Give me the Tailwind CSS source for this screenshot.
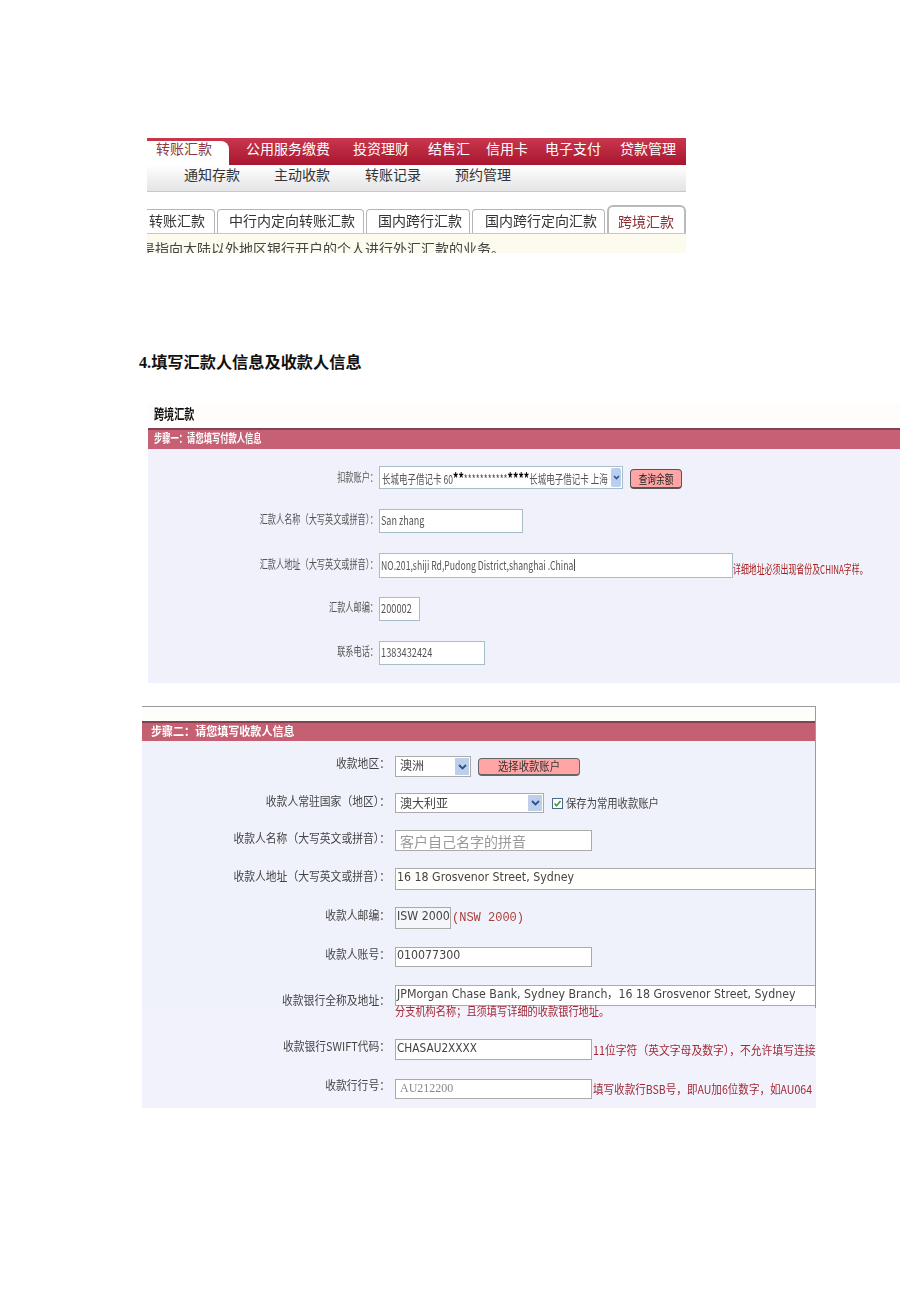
<!DOCTYPE html>
<html lang="zh-CN">
<head>
    <meta charset="UTF-8">
    <title>跨境汇款</title>
    <script src="https://cdn.jsdelivr.net/npm/@tailwindcss/browser@4"></script>
</head>
<body class="bg-white h-[1302px] overflow-hidden font-['Noto_Sans_CJK_SC',sans-serif] text-[#333]">

    <!-- 截图一: 导航 -->
    <section class="ml-[147px] mr-[234px] pt-[138px] h-[253px] overflow-hidden blur-[0.4px] text-[14px] leading-none">
        <div class="h-[27px] flex bg-gradient-to-b from-[#c9364d] to-[#a9142f] text-white">
            <div class="w-[82px] mt-[3px] pl-[9px] bg-white rounded-tr-[8px] text-[#8a3a40]">转账汇款</div>
            <span class="ml-[17px] pt-[3px]">公用服务缴费</span>
            <span class="ml-[23px] pt-[3px]">投资理财</span>
            <span class="ml-[19px] pt-[3px]">结售汇</span>
            <span class="ml-[16px] pt-[3px]">信用卡</span>
            <span class="ml-[17px] pt-[3px]">电子支付</span>
            <span class="ml-[19px] pt-[3px]">贷款管理</span>
        </div>
        <div class="h-[27px] flex pt-[2px] bg-gradient-to-b from-white to-[#e4e4e6] border-b border-[#c8c8c8] text-[#333]">
            <span class="ml-[37px]">通知存款</span>
            <span class="ml-[34px]">主动收款</span>
            <span class="ml-[35px]">转账记录</span>
            <span class="ml-[34px]">预约管理</span>
        </div>
        <div class="h-[42px] pt-[13px] flex items-end gap-[2px] border-b border-[#c8c8c8] text-[#333]">
            <div class="w-[68px] h-[24px] pt-[3px] pl-[2px] border-r border-t border-[#b5b5b5] rounded-tr-[4px] overflow-hidden whitespace-nowrap">转账汇款</div>
            <div class="w-[147px] h-[24px] pt-[3px] pl-[11px] border border-b-0 border-[#b5b5b5] rounded-t-[4px] whitespace-nowrap">中行内定向转账汇款</div>
            <div class="w-[104px] h-[24px] pt-[3px] pl-[11px] border border-b-0 border-[#b5b5b5] rounded-t-[4px] whitespace-nowrap">国内跨行汇款</div>
            <div class="w-[133px] h-[24px] pt-[3px] pl-[12px] border border-b-0 border-[#b5b5b5] rounded-t-[4px] whitespace-nowrap">国内跨行定向汇款</div>
            <div class="w-[79px] h-[28px] pt-[7px] pl-[9px] border-2 border-b-0 border-[#b9b9b9] rounded-t-[6px] text-[#8a2f35] whitespace-nowrap">跨境汇款</div>
        </div>
        <div class="h-[19px] pt-[7px] bg-[#fdfbee] text-[14px] whitespace-nowrap overflow-hidden text-[#444]">
            <span class="inline-block ml-[-6px]">是指向大陆以外地区银行开户的个人进行外汇汇款的业务。</span>
        </div>
    </section>

    <!-- 标题 -->
    <h2 class="ml-[139px] mt-[100px] h-[20px] text-[16.2px] leading-[20px] font-bold text-[#111] font-['Liberation_Serif','Noto_Sans_CJK_SC',serif]">4.填写汇款人信息及收款人信息</h2>

    <!-- 截图二: 付款人信息 -->
    <section class="ml-[148px] mt-[30px] w-[752px] blur-[0.35px] text-[12px]">
        <div class="h-[25px] pl-[6px] leading-[20px] bg-[#fffdfb] text-[14px] font-bold text-[#111]">
            <span class="block w-max origin-left scale-x-[0.72]">跨境汇款</span>
        </div>
        <div class="h-[21px] pl-[6px] border-t-2 border-[#84414f] bg-[#c66074] text-white font-bold leading-[16px]">
            <span class="block w-max origin-left scale-x-[0.69]">步骤一：请您填写付款人信息</span>
        </div>
        <div class="bg-[#f0f1fa] pt-[17px] pb-[18px] grid grid-cols-[231px_minmax(0,1fr)] items-center leading-none text-[#555]">
            <div class="flex justify-end pr-[1px] h-[23px] items-center whitespace-nowrap pb-[2px]"><span class="block origin-right scale-x-[0.68]">扣款账户：</span></div>
            <div class="flex items-center h-[23px]">
                <div class="w-[244px] h-[23px] bg-white border border-[#a9bdc9] flex items-center overflow-hidden">
                    <span class="flex-1 pl-[2px] whitespace-nowrap overflow-hidden"><span class="block w-max origin-left scale-x-[0.71]">长城电子借记卡 60<b class="text-black text-[15px] leading-none">**</b>***********<b class="text-black text-[15px] leading-none">****</b>长城电子借记卡 上海</span></span>
                    <span class="w-[10px] h-[19px] mr-[1px] bg-[#b9cff0] rounded-[2px] flex items-center justify-center">
                        <svg width="7" height="5" viewBox="0 0 7 5"><path d="M1 1l2.5 2.5L6 1" fill="none" stroke="#2f4f8f" stroke-width="1.6"/></svg>
                    </span>
                </div>
                <div class="ml-[7px] mt-[3px] w-[52px] h-[20px] bg-[#ffa5a5] border border-[#555] border-b-2 rounded-[4px] flex justify-center items-center text-[#222]"><span class="block whitespace-nowrap scale-x-[0.72]">查询余额</span></div>
            </div>

            <div class="mt-[20px] pb-[4px] flex justify-end pr-[1px] whitespace-nowrap"><span class="block origin-right scale-x-[0.68]">汇款人名称（大写英文或拼音）：</span></div>
            <div class="mt-[20px] w-[144px] h-[24px] bg-white border border-[#a9bdc9] pl-[1px] pb-[2px] flex items-center"><span class="block origin-left scale-x-[0.75] whitespace-nowrap">San zhang</span></div>

            <div class="mt-[20px] pb-[4px] flex justify-end pr-[1px] whitespace-nowrap"><span class="block origin-right scale-x-[0.68]">汇款人地址（大写英文或拼音）：</span></div>
            <div class="mt-[20px] flex items-center">
                <div class="w-[354px] shrink-0 h-[25px] bg-white border border-[#a9bdc9] pl-[1px] pb-[2px] flex items-center"><span class="block w-max origin-left scale-x-[0.72] whitespace-nowrap border-r border-black pr-[1px]">NO.201,shiji Rd,Pudong District,shanghai .China</span></div>
                <span class="mt-[6px] text-[#a81e1e] whitespace-nowrap"><span class="block w-max origin-left scale-x-[0.66]">详细地址必须出现省份及CHINA字样。</span></span>
            </div>

            <div class="mt-[19px] pb-[4px] flex justify-end pr-[1px] whitespace-nowrap"><span class="block origin-right scale-x-[0.68]">汇款人邮编：</span></div>
            <div class="mt-[19px] w-[41px] h-[24px] bg-white border border-[#a9bdc9] pl-[1px] pb-[2px] flex items-center"><span class="block origin-left scale-x-[0.77]">200002</span></div>

            <div class="mt-[20px] pb-[4px] flex justify-end pr-[1px] whitespace-nowrap"><span class="block origin-right scale-x-[0.68]">联系电话：</span></div>
            <div class="mt-[20px] w-[106px] h-[24px] bg-white border border-[#a9bdc9] pl-[1px] pb-[2px] flex items-center"><span class="block origin-left scale-x-[0.77]">1383432424</span></div>
        </div>
    </section>

    <!-- 截图三: 收款人信息 -->
    <section class="ml-[142px] mt-[23px] w-[674px] blur-[0.4px] text-[12px] text-[#444]">
        <div class="border-t border-r border-[#9a9aa0] bg-[#f0f2fb]">
            <div class="h-[14px] bg-[#fdfefa]"></div>
            <div class="h-[20px] pl-[9px] border-t-2 border-[#84414f] bg-[#c46072] text-white font-bold leading-[15px]">
                <span class="block w-max origin-left scale-x-[0.92]">步骤二：请您填写收款人信息</span>
            </div>
            <div class="grid grid-cols-[253px_minmax(0,1fr)] items-center leading-none pb-[2px]">
                <div class="mt-[15px] pb-[8px] flex justify-end pr-[5px] whitespace-nowrap"><span class="block origin-right scale-x-[0.9]">收款地区：</span></div>
                <div class="mt-[15px] flex items-center">
                    <div class="w-[76px] h-[21px] bg-white border border-[#aaa] pl-[4px] flex items-center justify-between"><span class="block mb-[3px]">澳洲</span><span class="w-[14px] h-[17px] mr-[1px] bg-[#bcd0ec] flex items-center justify-center"><svg width="9" height="6" viewBox="0 0 9 6"><path d="M1 1l3.5 3.5L8 1" fill="none" stroke="#2f4f8f" stroke-width="1.8"/></svg></span></div>
                    <div class="ml-[7px] w-[102px] h-[18px] bg-[#ffa5a5] border border-[#666] border-b-2 rounded-[4px] flex justify-center items-center text-[#333]"><span class="block scale-x-[0.86]">选择收款账户</span></div>
                </div>

                <div class="mt-[16px] pb-[4px] flex justify-end pr-[5px] whitespace-nowrap"><span class="block origin-right scale-x-[0.9]">收款人常驻国家（地区）：</span></div>
                <div class="mt-[16px] flex items-center">
                    <div class="w-[149px] h-[20px] bg-white border border-[#aaa] pl-[4px] flex items-center justify-between"><span>澳大利亚</span><span class="w-[14px] h-[16px] mr-[1px] bg-[#bcd0ec] flex items-center justify-center"><svg width="9" height="6" viewBox="0 0 9 6"><path d="M1 1l3.5 3.5L8 1" fill="none" stroke="#2f4f8f" stroke-width="1.8"/></svg></span></div>
                    <span class="ml-[8px] w-[11px] h-[11px] bg-white border border-[#4a6a8a] flex items-center justify-center"><svg width="9" height="9" viewBox="0 0 9 9"><path d="M1.5 4.5l2 2.2L7.5 2" fill="none" stroke="#3a9a3a" stroke-width="1.6"/></svg></span>
                    <span class="ml-[3px] block origin-left scale-x-[0.86] whitespace-nowrap">保存为常用收款账户</span>
                </div>

                <div class="mt-[17px] pb-[6px] flex justify-end pr-[5px] whitespace-nowrap"><span class="block origin-right scale-x-[0.9]">收款人名称（大写英文或拼音）：</span></div>
                <div class="mt-[17px] w-[197px] h-[21px] bg-white border border-[#aaa] pl-[4px] flex items-center text-[14px] text-[#999] whitespace-nowrap">客户自己名字的拼音</div>

                <div class="mt-[17px] pb-[6px] flex justify-end pr-[5px] whitespace-nowrap"><span class="block origin-right scale-x-[0.9]">收款人地址（大写英文或拼音）：</span></div>
                <div class="mt-[17px] h-[22px] bg-[#fffffb] border-y border-[#aaa] border-l pl-[1px] pb-[4px] flex items-center font-['DejaVu_Sans',sans-serif]"><span class="block origin-left scale-x-[0.92] whitespace-nowrap">16 18 Grosvenor Street, Sydney</span></div>

                <div class="mt-[17px] pb-[6px] flex justify-end pr-[5px] whitespace-nowrap"><span class="block origin-right scale-x-[0.9]">收款人邮编：</span></div>
                <div class="mt-[17px] flex items-center">
                    <div class="w-[56px] h-[22px] bg-[#f5f6fa] border border-[#aaa] pl-[1px] pb-[4px] flex items-center font-['DejaVu_Sans',sans-serif]"><span class="block origin-left scale-x-[0.92] whitespace-nowrap">ISW 2000</span></div>
                    <span class="ml-[1px] text-[#a8413a] text-[12px] font-['Liberation_Mono',monospace] whitespace-nowrap">(NSW 2000)</span>
                </div>

                <div class="mt-[18px] pb-[6px] flex justify-end pr-[5px] whitespace-nowrap"><span class="block origin-right scale-x-[0.9]">收款人账号：</span></div>
                <div class="mt-[18px] w-[197px] h-[20px] bg-white border border-[#aaa] pl-[1px] pb-[4px] flex items-center font-['DejaVu_Sans',sans-serif]"><span class="block origin-left scale-x-[0.92]">010077300</span></div>

                <div class="mt-[18px] flex justify-end pr-[5px] whitespace-nowrap translate-y-[4px]"><span class="block origin-right scale-x-[0.9]">收款银行全称及地址：</span></div>
                <div class="mt-[18px] h-[21px] bg-white border-y border-l border-[#aaa] pl-[1px] pb-[4px] flex items-center overflow-hidden font-['DejaVu_Sans',sans-serif]"><span class="block w-max origin-left scale-x-[0.92] whitespace-nowrap">JPMorgan Chase Bank, Sydney Branch，16 18 Grosvenor Street, Sydney</span></div>
            </div>
        </div>
        <div class="bg-[#f1f2fb] grid grid-cols-[253px_minmax(0,1fr)] items-center leading-none pb-[9px]">
            <div></div>
            <div class="h-[14px] mt-[-1px] leading-[8px] text-[#a32a38] whitespace-nowrap"><span class="block origin-left scale-x-[0.85]">分支机构名称；且须填写详细的收款银行地址。</span></div>

            <div class="mt-[18px] pb-[8px] flex justify-end pr-[5px] whitespace-nowrap"><span class="block origin-right scale-x-[0.9]">收款银行SWIFT代码：</span></div>
            <div class="mt-[18px] flex items-center overflow-hidden">
                <div class="w-[197px] shrink-0 h-[21px] bg-white border border-[#aaa] pl-[1px] pb-[4px] flex items-center font-['DejaVu_Sans',sans-serif]"><span class="block origin-left scale-x-[0.88]">CHASAU2XXXX</span></div>
                <span class="ml-[1px] text-[#a32a38] whitespace-nowrap"><span class="block w-max origin-left scale-x-[0.9]">11位字符（英文字母及数字），不允许填写连接符</span></span>
            </div>

            <div class="mt-[19px] pb-[8px] flex justify-end pr-[5px] whitespace-nowrap"><span class="block origin-right scale-x-[0.9]">收款行行号：</span></div>
            <div class="mt-[19px] flex items-center overflow-hidden">
                <div class="w-[197px] shrink-0 h-[20px] bg-white border border-[#aaa] pl-[4px] pb-[2px] flex items-center text-[#888] font-['Liberation_Serif',serif]">AU212200</div>
                <span class="ml-[1px] text-[#a32a38] whitespace-nowrap"><span class="block w-max origin-left scale-x-[0.88]">填写收款行BSB号，即AU加6位数字，如AU064</span></span>
            </div>
        </div>
    </section>
</body>
</html>
